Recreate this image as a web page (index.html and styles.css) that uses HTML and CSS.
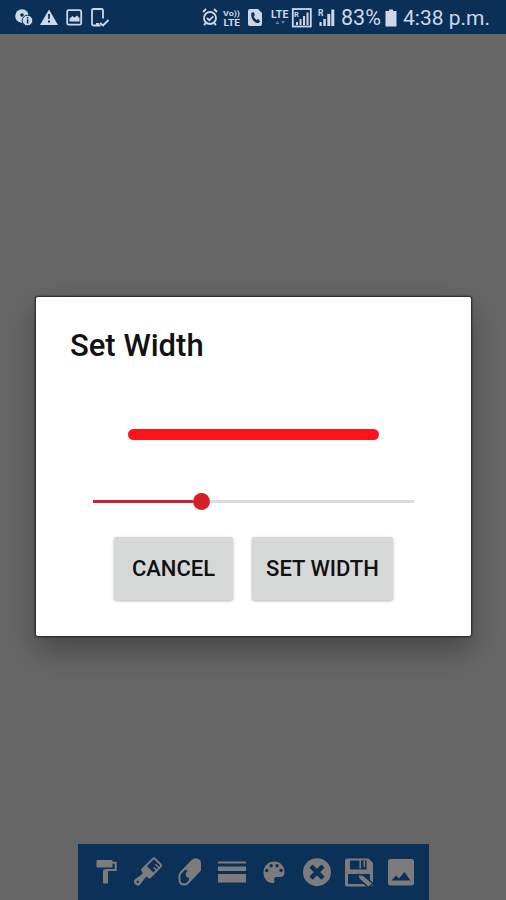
FILE: index.html
```html
<!DOCTYPE html>
<html lang="en">
<head>
<meta charset="utf-8">
<title>Set Width</title>
<link rel="stylesheet" href="styles.css">
</head>
<body>
<div class="screen">
  <header class="status">
    <svg class="status-left" width="112" height="34" viewBox="0 0 112 34">
      <circle cx="22" cy="16" r="6.8"/>
      <circle class="cut" cx="22" cy="15" r="1.8"/>
      <circle cx="27.5" cy="20.5" r="5.3" class="ring"/>
      <path class="cut" d="M26.8 17h1.6v1.5h-1.6zm0 2.2h1.6v4.3h-1.6z"/>
      <path d="M49 9.500 58 25H40z"/>
      <path class="cut" d="M48 14h2l-.3 5h-1.4zm0 6.5h2v2h-2z"/>
      <rect class="line" x="67.2" y="10.2" width="14" height="14.5" rx="1.5"/>
      <path d="M69.5 21.5v-3l3-2.5 2 1.5 2.5-2 2.5 2.5v3.5z"/>
      <path class="line" d="M103 18.500V10.500q0-1.500-1.500-1.500h-8q-1.500 0-1.500 1.500v13.500q0 1.500 1.500 1.500h7M96 24h3m1-1 3 2.500 5.500-5.500"/>
    </svg>
    <div class="status-right">
      <svg width="142" height="34" viewBox="198 0 142 34">
        <circle class="line" cx="210" cy="18" r="6"/>
        <path class="line" d="m203 12 3-3m11 3-3-3m-7 9 2.300 2.300 4-4M206 23l-2 2m10-2 2 2"/>
        <text x="223" y="16" font-size="8" textLength="17" lengthAdjust="spacingAndGlyphs">Vo))</text>
        <text x="223.500" y="26" font-size="9.500" textLength="16.500" lengthAdjust="spacingAndGlyphs">LTE</text>
        <path d="M248 11q0-2 2-2h8l4 4v11q0 2-2 2h-10q-2 0-2-2z"/>
        <path class="cut" d="M251.500 12.800l2-.8 1.500 3-1.300 1.200q1 2.600 3 3.800l1.500-1 2 2.500-1.500 1.500c-4.500.5-8.500-5.500-7.200-10.200z"/>
        <text x="271" y="17.500" font-size="10.500" textLength="17.500">LTE</text>
        <path class="faint" d="M275.500 24l2-3 2 3zm5.500-3h4l-2 3z"/>
        <rect class="line" x="292.800" y="9" width="18" height="17.500"/>
        <path d="M296 25v-3h2v3zm3.500 0v-6h2v6zm3.500 0v-9h2v9zm3.500 0V12.500h2V25z"/>
        <text x="294" y="17" font-size="7.500">R</text>
        <text x="318" y="16" font-size="8.500">R</text>
        <path d="M319.500 26v-4h2.200v4zm3.800 0v-7h2.500v7zm4 0V14h3v12zm4 0V9.500h3V26z"/>
      </svg>
      <span class="percent">83%</span>
      <svg class="battery" width="12" height="34" viewBox="0 0 12 34"><path d="M4 9.500h4v1.500h3.500v15.500H.5V11H4z"/></svg>
      <span class="clock">4:38 p.m.</span>
    </div>
  </header>

  <main class="canvas">
    <section class="dialog">
      <h1 class="title">Set Width</h1>
      <div class="preview"></div>
      <div class="slider"><span class="fill"></span><span class="thumb"></span><span class="rest"></span></div>
      <div class="actions">
        <button class="btn cancel">CANCEL</button>
        <button class="btn confirm">SET WIDTH</button>
      </div>
    </section>
  </main>

  <nav class="toolbar">
    <svg viewBox="0 0 42 56"><rect x="11.500" y="16" width="16" height="7.500" rx="1"/><path class="stroke" d="M27 18.800h3.700v7.200H20.500v3"/><rect x="18" y="26" width="5" height="13.500" rx=".8"/></svg>
    <svg viewBox="0 0 42 56"><g transform="translate(19.500 29) rotate(45)"><path class="stroke" d="M-5.500-4v-10.500q0-1.500 1.500-1.500h8q1.500 0 1.500 1.500V-4z"/><path class="stroke thin" d="M5-12.500H0M5-9H1"/><path d="M-6.500-5h13v5.500Q6.500 2.500 2.500 2.500v2l1.200 8q0 3.500-3.700 3.500t-3.700-3.500l1.200-8v-2q-4 0-4-2z"/><circle class="hole" cx="0" cy="12.500" r="1.200"/></g></svg>
    <svg viewBox="0 0 42 56"><path class="stroke" d="M23.500 16.500 12 28.500Q10.500 30 10.500 32v4q0 4.500 5 4.500 2 0 3.300-1.500L31 26v-6.500q0-3.500-3.300-4-2-.5-4.200 1z"/><path d="M23.500 16.500q2-1.800 4.500-1.200 3 .7 3 4.200V26L20 37.500v-3.800q-3.500-.2-3.300-3.700.2-2 2-3-1.200-1.300-4-1.200z"/></svg>
    <svg viewBox="0 0 42 56"><path d="M7 17.500h28v2H7zm0 5h28v4.500H7zm0 7.500h28v8.500H7z"/></svg>
    <svg viewBox="0 0 42 56"><path d="M20.500 17.500C14 17.500 9.500 22 9.500 28.500S14 39 18 39q2.800 0 2.300-2.600-.8-3 2.200-3.400H26c3 0 4.500-2 4.500-5 0-6-4.500-10.500-10-10.500z"/><g class="hole"><circle cx="12.800" cy="26.500" r="1.700"/><circle cx="17.200" cy="21.800" r="1.700"/><circle cx="23" cy="21.800" r="1.700"/><circle cx="27" cy="26.500" r="1.700"/></g></svg>
    <svg viewBox="0 0 42 56"><circle cx="21" cy="28.200" r="14"/><path class="cross" d="m15 22.200 12 12m0-12-12 12"/></svg>
    <svg viewBox="0 0 42 56"><path d="M9.500 14.500h21l4.500 4.500v21.500q0 2-2 2H9q-2 0-2-2v-24q0-2 2.500-2z"/><path class="hole" d="M12 16.500h16.500v9H12zM10 30h22v10H10z"/><path d="M21.500 16h1.500v8.500h-1.500zm4 1h1.500v6h-1.500z"/><path class="pen" d="m19.500 30.500 5.500.5 10 8.500-4.500 4-9.500-8.500z"/></svg>
    <svg viewBox="0 0 42 56"><rect x="8" y="15" width="26" height="26.500" rx="2.500"/><path class="hole" d="m11.500 36.500 4.500-5 3 3 5.500-6.500 6 8.500z"/></svg>
  </nav>
</div>
</body>
</html>
```
FILE: styles.css
```css
* { box-sizing: border-box; }
body { margin: 0; font-family: Roboto, "Liberation Sans", sans-serif; }
.screen { width: 506px; height: 900px; display: flex; flex-direction: column; align-items: center; background: #666; overflow: hidden; }
svg { display: block; flex: none; }

.status { width: 100%; height: 34px; flex: none; display: flex; justify-content: space-between; background: #0b3058; color: #ccd7e8; fill: #ccd7e8; }
.status-right { display: flex; align-items: center; width: 308px; height: 34px; font-size: 22px; line-height: 34px; white-space: nowrap; }
.status text { font-weight: 700; }
.status .cut { fill: #0b3058; }
.status .ring { stroke: #0b3058; stroke-width: 1; }
.status .line { fill: none; stroke: #ccd7e8; stroke-width: 1.8; }
.status .faint { opacity: .45; }
.percent { width: 41px; margin-left: 1px; padding-top: 2px; font-size: 21.500px; }
.battery { margin-left: 3px; }
.clock { margin-left: 6px; padding-top: 2px; font-size: 21px; }

.canvas { width: 100%; height: 810px; flex: none; display: flex; flex-direction: column; align-items: center; padding-top: 263px; }
.dialog { width: 435px; height: 339px; margin-left: 1px; background: #fff; border-radius: 2px; box-shadow: 0 0 2px 1px #222, 0 14px 28px rgba(0, 0, 0, .3); display: flex; flex-direction: column; align-items: center; padding-top: 29px; }
.title { width: 100%; margin: 0; padding-left: 34px; font-size: 31px; line-height: 40px; font-weight: 500; color: #111; }
.preview { width: 251px; height: 11px; margin-top: 63px; border-radius: 6px; background: #ff131b; }
.slider { width: 321px; height: 18px; margin-top: 52px; display: flex; align-items: center; }
.fill { width: 100px; height: 3px; background: #c9252b; }
.thumb { width: 17px; height: 17px; border-radius: 50%; background: #d32027; }
.rest { flex: 1; height: 3px; background: #dcdcdc; }
.actions { display: flex; gap: 19px; margin-top: 27px; }
.btn { height: 63px; border: 0; padding: 0; border-radius: 2px; background: #d6d8d7; box-shadow: 0 1px 3px rgba(0, 0, 0, .3); font: 500 22px/63px Roboto, sans-serif; color: #111; white-space: nowrap; }
.cancel { width: 119px; }
.confirm { width: 141px; }

.toolbar { width: 351px; height: 56px; flex: none; padding: 0 6px 0 7px; display: flex; justify-content: space-between; background: #0b3158; fill: #7c7c7c; }
.toolbar svg { width: 42px; height: 56px; }
.toolbar .hole { fill: #0b3158; }
.toolbar .stroke { fill: none; stroke: #7c7c7c; stroke-width: 2; }
.toolbar .thin { stroke-width: 1.5; }
.toolbar .cross { stroke: #0b3158; stroke-width: 4.5; }
.toolbar .pen { stroke: #0b3158; stroke-width: 1.5; }
```
